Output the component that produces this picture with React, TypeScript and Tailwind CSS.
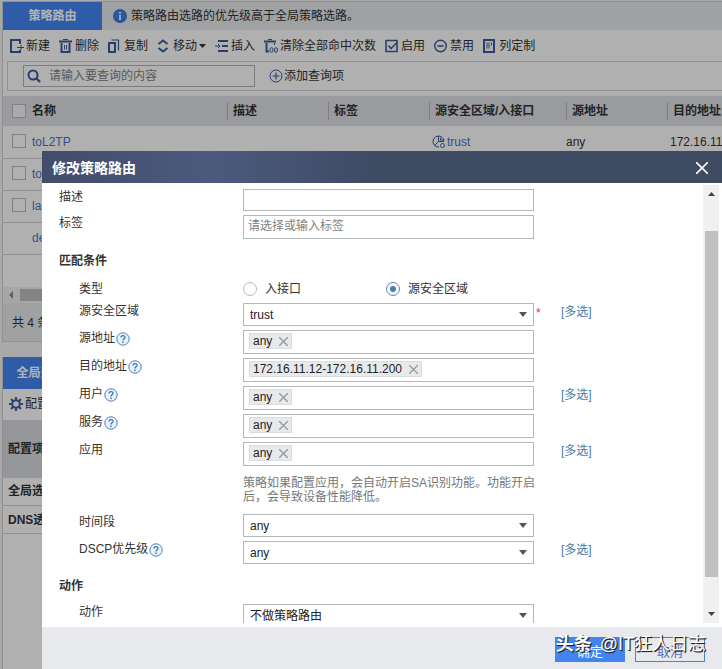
import type { ReactNode } from "react";

// Types
interface Rule {
  name: string;
  selectable: boolean;
  zone?: string;
  source?: string;
  destination?: string;
}

interface FieldProps {
  label: string;
  id: string;
  help?: boolean;
  required?: boolean;
  multi?: boolean;
  children: ReactNode;
}

// Data
const rules: Rule[] = [
  { name: "toL2TP", selectable: true, zone: "trust", source: "any", destination: "172.16.11.12" },
  { name: "to", selectable: true },
  { name: "la", selectable: true },
  { name: "de", selectable: false }
];

const columns = ["描述", "标签", "源安全区域/入接口", "源地址", "目的地址"];

const Icon = ({ children }: { children: ReactNode }) => (
  <svg
    viewBox="0 0 14 14"
    className="h-3.5 w-3.5 shrink-0 fill-none stroke-[#3c5a9c] stroke-2"
    aria-hidden="true"
  >
    {children}
  </svg>
);

// Thin parts go in their own group, stroke-2 on the svg is only inherited
const toolbar = [
  {
    label: "新建",
    icon: (
      <Icon>
        <path d="M10 5V1H1v12h7M10 11v2H8" />
        <path d="M7 8.5h7M11 6v5" strokeWidth="1" />
      </Icon>
    )
  },
  {
    label: "删除",
    icon: (
      <Icon>
        <path d="M0 2.5h13M2.5 4v9h8V4" />
        <path d="M4 .5h5M5.5 6v4.500M7.500 6v4.500" strokeWidth="1" />
      </Icon>
    )
  },
  {
    label: "复制",
    icon: (
      <Icon>
        <path d="M1 4h6v9H1z" />
        <path d="M3.5 1h7v10.500" strokeWidth="1.2" />
      </Icon>
    )
  },
  {
    label: "移动",
    caret: true,
    icon: (
      <Icon>
        <path d="M1.500 5 6 1.500 10.500 5M1.500 9 6 12.500 10.500 9" />
      </Icon>
    )
  },
  {
    label: "插入",
    icon: (
      <Icon>
        <path d="M3 2h10M7 7h6M3 12h10" />
        <path d="M0 7h5M3 5l2 2-2 2" strokeWidth="1" />
      </Icon>
    )
  },
  {
    label: "清除全部命中次数",
    icon: (
      <Icon>
        <path d="M0 2.500h12M2.500 4v8.500H5" />
        <path d="M4 .5h4M10.500 4v2" strokeWidth="1.200" />
        <ellipse cx="7.500" cy="11" rx="1.600" ry="2.300" strokeWidth="1" />
        <ellipse cx="12" cy="11" rx="1.500" ry="2.300" strokeWidth="1" />
      </Icon>
    )
  },
  {
    label: "启用",
    icon: (
      <Icon>
        <path d="M1 1.500h11v11H1z" strokeWidth="1.600" />
        <path d="m3.500 6.500 2.500 3 6-6" strokeWidth="1.600" />
      </Icon>
    )
  },
  {
    label: "禁用",
    icon: (
      <Icon>
        <circle cx="6.500" cy="7" r="5.800" strokeWidth="1.400" />
        <path d="M3.500 7h6" strokeWidth="1.600" />
      </Icon>
    )
  },
  {
    label: "列定制",
    icon: (
      <Icon>
        <path d="M1 1h10v12H1z" />
        <path d="M4 3.500v6M6 3.500v6M8.500 3.500v3" strokeWidth="1" />
      </Icon>
    )
  }
];

const HelpIcon = () => (
  <svg viewBox="0 0 14 14" className="h-3.5 w-3.5 shrink-0" aria-hidden="true">
    <circle cx="7" cy="7" r="6.2" fill="#eaf3fc" stroke="#4d7fb5" strokeWidth="1" />
    <path d="M5 5.500C5 3 9 3 9 5.300 9 6.800 7 6.700 7 8.500" fill="none" stroke="#3f72ab" strokeWidth="1.300" />
    <path d="M7 9.600v1.300" stroke="#3f72ab" strokeWidth="1.400" />
  </svg>
);

const Field = ({ label, id, help, required, multi, children }: FieldProps) => (
  <div className="flex items-start">
    <div className="flex w-[164px] shrink-0 items-center gap-px">
      <label htmlFor={id} className="leading-[17px]">
        {label}
      </label>
      {help && <HelpIcon />}
    </div>
    <div className="w-[291px] shrink-0">{children}</div>
    <span className="w-[27px] shrink-0 pl-[2px] leading-5 text-[#e03030]">{required && "*"}</span>
    {multi && (
      <a href="#multi" className="leading-[18px] text-[#457ba5]">
        [多选]
      </a>
    )}
  </div>
);

const SelectBox = ({ id, value }: { id: string; value: string }) => (
  <div className="relative">
    <select
      id={id}
      className="block h-[23px] w-full appearance-none border border-[#b5b8b8] bg-white pl-1.5 text-xs text-[#222]"
    >
      <option>{value}</option>
    </select>
    <svg viewBox="0 0 8 5" className="pointer-events-none absolute top-[9px] right-[7px] h-[5px] w-2 fill-[#555]">
      <path d="M0 0h8L4 5z" />
    </svg>
  </div>
);

const TagBox = ({ id, value }: { id: string; value: string }) => (
  <div className="flex h-6 items-start border border-[#b5b8b8] bg-white pt-0.5 pl-[5px]">
    <span className="flex h-4 items-center gap-[7px] border border-[#dadcde] bg-[#e8e9eb] px-[3px] text-[#222]">
      {value}
      <button type="button" aria-label={`移除 ${value}`}>
        <svg viewBox="0 0 9 9" className="h-[9px] w-[9px] stroke-[#999]" strokeWidth="1.3">
          <path d="m0 0 9 9M9 0 0 9" />
        </svg>
      </button>
    </span>
    <input id={id} className="min-w-0 flex-1 outline-none" />
  </div>
);

const PolicyPage = () => (
  <main className="pt-px pl-0.5">
    <section className="border-t border-b border-l border-[#d0d0d0] bg-[#fdfdfd]">
      <div className="flex h-7 items-stretch bg-[#e5e7ea]">
        <button type="button" className="w-[99px] bg-[#4285f0] font-bold text-white">
          策略路由
        </button>
        <p className="flex items-center gap-1 pl-[11px]">
          <svg viewBox="0 0 14 14" className="h-3.5 w-3.5" aria-hidden="true">
            <circle cx="7" cy="7" r="7" fill="#3d7be0" />
            <path d="M7 6v5M7 3v1.800" stroke="#fff" strokeWidth="1.800" />
          </svg>
          策略路由选路的优先级高于全局策略选路。
        </p>
      </div>

      {/* Toolbar */}
      <div className="flex h-[31px] items-center gap-[9px] pt-px pl-[7px] whitespace-nowrap">
        {toolbar.map((item) => (
          <button key={item.label} type="button" className="flex shrink-0 items-center gap-0.5">
            {item.icon}
            <span>{item.label}</span>
            {item.caret && (
              <svg viewBox="0 0 7 4" className="h-1 w-[7px] fill-[#333]">
                <path d="M0 0h7L3.500 4z" />
              </svg>
            )}
          </button>
        ))}
      </div>

      {/* Search */}
      <div className="ml-1 flex h-[30px] items-center border border-r-0 border-[#d0d0d0] pl-[15px]">
        <label className="flex h-[22px] w-[232px] items-center gap-2 border border-[#b0b3b8] pl-[3px]">
          <Icon>
            <circle cx="6" cy="6" r="4.500" />
            <path d="m9 9 4 4" strokeWidth="2.400" />
          </Icon>
          <input
            aria-label="查询"
            placeholder="请输入要查询的内容"
            className="min-w-0 flex-1 outline-none placeholder:text-[#808080]"
          />
        </label>
        <button type="button" className="ml-3.5 flex items-center gap-px">
          <Icon>
            <circle cx="7" cy="7" r="6" strokeWidth="1" />
            <path d="M3.500 7h7M7 3.500v7" strokeWidth="1.200" />
          </Icon>
          添加查询项
        </button>
      </div>

      {/* Rules */}
      <table className="mt-[5px] w-full table-fixed text-left whitespace-nowrap">
        <colgroup>
          <col className="w-[224px]" />
          <col className="w-[101px]" />
          <col className="w-[101px]" />
          <col className="w-[137px]" />
          <col className="w-[101px]" />
          <col />
        </colgroup>
        <thead className="bg-[#dddfe3]">
          <tr className="h-[30px]">
            <th>
              <div className="flex items-center gap-1.5 pl-[9px]">
                <input
                  type="checkbox"
                  aria-label="全选"
                  className="h-3.5 w-3.5 appearance-none border border-[#bbb] bg-[#f4f4f4]"
                />
                名称
              </div>
            </th>
            {columns.map((name) => (
              <th key={name}>
                <div className="border-l border-[#b4b6ba] pl-[5px] leading-[18px]">{name}</div>
              </th>
            ))}
          </tr>
        </thead>
        <tbody>
          {rules.map((rule) => (
            <tr key={rule.name} className="h-8 border-b border-[#d0d0d0]">
              <td>
                <div className="flex items-start gap-1.5 pl-[9px]">
                  {rule.selectable ? (
                    <input
                      type="checkbox"
                      aria-label={rule.name}
                      className="h-3.5 w-3.5 appearance-none border border-[#bbb]"
                    />
                  ) : (
                    <span className="w-3.5" />
                  )}
                  <a href="#rule" className="text-[#4a72c8]">
                    {rule.name}
                  </a>
                </div>
              </td>
              <td />
              <td />
              <td>
                {rule.zone && (
                  <a href="#zone" className="flex items-center gap-px pl-[3px] text-[#4a72c8]">
                    <Icon>
                      <path
                        d="M12 6A5.500 5.500 0 1 0 7 12M6.500 1v5.500H12M6.500 6.500l-4 4M8.500 2.500v2.500h3"
                        strokeWidth="1"
                      />
                      <circle cx="10.500" cy="10.500" r="2" strokeWidth="1" />
                    </Icon>
                    {rule.zone}
                  </a>
                )}
              </td>
              <td>{rule.source}</td>
              <td className="pl-[3px]">{rule.destination}</td>
            </tr>
          ))}
        </tbody>
      </table>
      <div className="mt-8 flex h-4 items-center bg-[#eee] pl-1.5">
        <svg viewBox="0 0 4 8" className="h-2 w-1 fill-[#888]">
          <path d="M4 0v8L0 4z" />
        </svg>
        <div className="ml-[7px] h-3 flex-1 bg-[#bcbcbc]" />
      </div>
      <div className="h-[38px] bg-[#e5e7ea] pl-[9px] leading-10">共 4 条</div>
    </section>

    {/* Global settings */}
    <section className="mt-[15px] border-l border-[#d0d0d0] bg-[#fdfdfd] pb-36">
      <div className="flex h-8 bg-[#e5e7ea]">
        <button type="button" className="w-[75px] bg-[#4285f0] font-bold text-white">
          全局选路
        </button>
      </div>
      <button type="button" className="flex h-[31px] items-center gap-0.5 pl-1.5">
        <Icon>
          <circle cx="7" cy="7" r="3.800" />
          <path d="M7 0v2.500M7 11.500V14M0 7h2.500M11.500 7H14M2 2l2 2M10 10l2 2M12 2l-2 2M4 10l-2 2" />
        </Icon>
        配置
      </button>
      <table className="w-full text-left font-bold">
        <thead>
          <tr className="h-[58px] bg-[#d7d9dd]">
            <th className="pl-[5px]">配置项</th>
          </tr>
        </thead>
        <tbody>
          <tr className="h-7 border-b border-[#d0d0d0]">
            <td className="pl-[5px]">全局选路</td>
          </tr>
          <tr className="h-7 border-b border-[#d0d0d0]">
            <td className="pl-[5px]">DNS透明</td>
          </tr>
        </tbody>
      </table>
    </section>
  </main>
);

const PolicyDialog = () => (
  <div
    role="dialog"
    aria-label="修改策略路由"
    className="fixed top-[151px] right-0 bottom-0 left-[42px] flex flex-col bg-white"
  >
    <header className="flex h-8 shrink-0 items-center justify-between bg-linear-to-r from-[#424c6b] via-[#4b5a7d] via-25% to-[#3f4a63] to-50% pt-px pr-3.5 pl-2.5 text-white">
      <h1 className="text-sm font-bold">修改策略路由</h1>
      <button type="button" aria-label="关闭">
        <svg viewBox="0 0 12 12" className="h-3 w-3 stroke-white" strokeWidth="1.6">
          <path d="m0 0 12 12M12 0 0 12" />
        </svg>
      </button>
    </header>

    <div className="mb-1 flex min-h-0 flex-1">
      <form className="flex-1 overflow-hidden pt-1.5 pl-[17px]">
        {/* Top level fields sit further left than the grouped ones */}
        <div className="flex flex-col gap-1">
          <div className="flex items-start">
            <label htmlFor="desc" className="w-[184px] shrink-0 leading-[17px]">
              描述
            </label>
            <input id="desc" className="h-[22px] w-[291px] border border-[#b5b8b8] px-1" />
          </div>
          <div className="flex items-start">
            <label htmlFor="tags" className="w-[184px] shrink-0 leading-[17px]">
              标签
            </label>
            <input
              id="tags"
              placeholder="请选择或输入标签"
              className="h-6 w-[291px] border border-[#b5b8b8] px-1 pb-0.5 placeholder:text-[#808080]"
            />
          </div>
        </div>

        <h2 className="mt-3 leading-5 font-bold">匹配条件</h2>
        <div className="flex flex-col gap-1 pl-5">
          <div className="mt-2 flex h-5 items-center">
            <span className="w-[164px] shrink-0">类型</span>
            <label className="flex w-[143px] items-center gap-2">
              <input
                type="radio"
                name="type"
                className="h-3.5 w-3.5 appearance-none rounded-full border border-[#bbb]"
              />
              入接口
            </label>
            <label className="flex items-center gap-2">
              <input
                type="radio"
                name="type"
                defaultChecked
                className="h-3.5 w-3.5 appearance-none rounded-full border border-[#5585b5] bg-[#4a7cb0] bg-clip-content p-[3px]"
              />
              源安全区域
            </label>
          </div>
          <Field label="源安全区域" id="zone" required multi>
            <SelectBox id="zone" value="trust" />
          </Field>
          <Field label="源地址" id="source" help>
            <TagBox id="source" value="any" />
          </Field>
          <Field label="目的地址" id="destination" help>
            <TagBox id="destination" value="172.16.11.12-172.16.11.200" />
          </Field>
          <Field label="用户" id="user" help multi>
            <TagBox id="user" value="any" />
          </Field>
          <Field label="服务" id="service" help>
            <TagBox id="service" value="any" />
          </Field>
          <Field label="应用" id="app" multi>
            <TagBox id="app" value="any" />
          </Field>
          <p className="mt-1.5 mb-1.5 ml-[164px] w-[296px] leading-[14px] text-[#777]">
            策略如果配置应用，会自动开启SA识别功能。功能开启后，会导致设备性能降低。
          </p>
          <Field label="时间段" id="time">
            <SelectBox id="time" value="any" />
          </Field>
          <Field label="DSCP优先级" id="dscp" help multi>
            <SelectBox id="dscp" value="any" />
          </Field>
        </div>

        <h2 className="mt-3 leading-5 font-bold">动作</h2>
        <div className="mt-2 pl-5">
          <Field label="动作" id="action">
            <SelectBox id="action" value="不做策略路由" />
          </Field>
        </div>
      </form>

      {/* Scrollbar */}
      <div className="mt-0.5 mr-[3px] flex w-4 shrink-0 flex-col items-center bg-[#f0f0f0]">
        <svg viewBox="0 0 7 4" className="mt-[7px] h-1 w-[7px] fill-[#444]">
          <path d="M0 4h7L3.500 0z" />
        </svg>
        <div className="mt-[35px] w-[13px] flex-1 bg-[#c0c0c0]" />
        <svg viewBox="0 0 7 4" className="mt-[35px] mb-[7px] h-1 w-[7px] fill-[#444]">
          <path d="M0 0h7L3.500 4z" />
        </svg>
      </div>
    </div>

    <footer className="relative flex h-[42px] shrink-0 items-start justify-end gap-2.5 bg-[#e7e9ec] pt-2.5 pr-[17px] text-[13px]">
      <button type="button" className="h-[25px] w-[70px] bg-[#4285f0] pt-1 text-white">
        确定
      </button>
      <button type="button" className="h-[25px] w-[70px] border border-[#5580c8] pt-1 text-[#4a72c8]">
        取消
      </button>
      <p className="pointer-events-none absolute top-1 right-4 flex gap-2 text-lg leading-[26px] whitespace-nowrap text-white [text-shadow:1px_1px_1px_#222,1px_1px_0_#333]">
        <b>头条</b>
        <span>@IT狂人日志</span>
      </p>
    </footer>
  </div>
);

const App = () => {
  return (
    <div className="relative h-screen overflow-hidden bg-[#f2f2f2] font-['Liberation_Sans','Noto_Sans_CJK_SC',sans-serif] text-xs text-[#333]">
      <PolicyPage />
      <div className="absolute inset-0 bg-black/30" />
      <PolicyDialog />
    </div>
  );
};

export default App;
